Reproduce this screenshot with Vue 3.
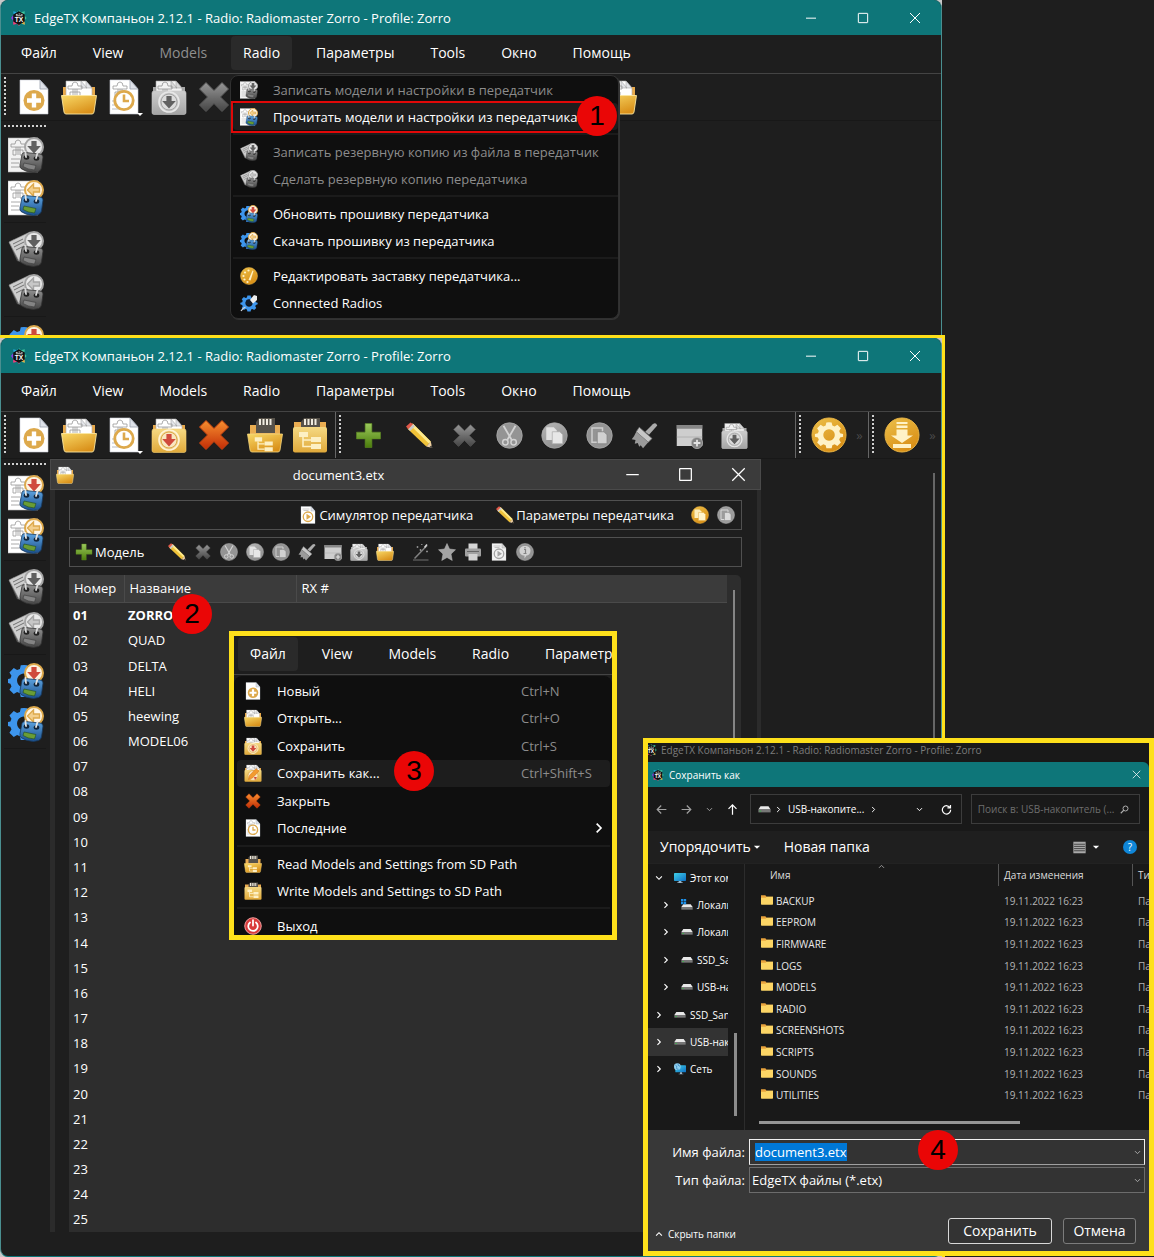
<script setup>
import { h, onMounted, ref } from 'vue'

const Icon = (props) =>
  h('svg', { viewBox: '0 0 36 36', 'aria-hidden': 'true' }, [h('use', { href: '#i-' + props.name })])
Icon.props = ['name']

const appTitle = 'EdgeTX Компаньон 2.12.1 - Radio: Radiomaster Zorro - Profile: Zorro'
const menus = ['Файл', 'View', 'Models', 'Radio', 'Параметры', 'Tools', 'Окно', 'Помощь']

const fileTools = [
  { icon: 'new', label: 'Новый' },
  { icon: 'open', label: 'Открыть' },
  { icon: 'recent', label: 'Последние', drop: true },
  { icon: 'save', label: 'Сохранить' },
  { icon: 'close', label: 'Закрыть' },
]
const sdTools = [
  { icon: 'sdread', label: 'Read from SD Path' },
  { icon: 'sdwrite', label: 'Write to SD Path' },
]
const editTools = [
  { icon: 'pencil', label: 'Редактировать' },
  { icon: 'close', label: 'Удалить', off: true },
  { icon: 'cut', label: 'Вырезать', off: true },
  { icon: 'copy', label: 'Копировать', off: true },
  { icon: 'paste', label: 'Вставить', off: true },
  { icon: 'brush', label: 'Мастер', off: true },
  { icon: 'window', label: 'Добавить', off: true },
  { icon: 'save', label: 'Сохранить модель', off: true },
]
const childTools = [
  { icon: 'wand', label: 'Wizard' },
  { icon: 'star', label: 'По умолчанию' },
  { icon: 'printer', label: 'Печать' },
  { icon: 'play', label: 'Симулятор модели' },
  { icon: 'info', label: 'Информация' },
]
const sideTools = [
  [
    { icon: 'write', label: 'Записать модели', needsDoc: true },
    { icon: 'read', label: 'Прочитать модели' },
  ],
  [
    { icon: 'backupwrite', label: 'Записать резервную копию', off: true },
    { icon: 'backupread', label: 'Сделать резервную копию', off: true },
  ],
  [
    { icon: 'fwwrite', label: 'Обновить прошивку' },
    { icon: 'fwread', label: 'Скачать прошивку' },
  ],
]

const radioMenu = [
  [
    { icon: 'write', text: 'Записать модели и настройки в передатчик', off: true },
    { icon: 'read', text: 'Прочитать модели и настройки из передатчика', active: true },
  ],
  [
    { icon: 'backupwrite', text: 'Записать резервную копию из файла в передатчик', off: true },
    { icon: 'backupread', text: 'Сделать резервную копию передатчика', off: true },
  ],
  [
    { icon: 'fwwrite', text: 'Обновить прошивку передатчика' },
    { icon: 'fwread', text: 'Скачать прошивку из передатчика' },
  ],
  [
    { icon: 'palette', text: 'Редактировать заставку передатчика...' },
    { icon: 'connected', text: 'Connected Radios' },
  ],
]
const fileMenu = [
  [
    { icon: 'new', text: 'Новый', key: 'Ctrl+N' },
    { icon: 'open', text: 'Открыть...', key: 'Ctrl+O' },
    { icon: 'save', text: 'Сохранить', key: 'Ctrl+S' },
    { icon: 'saveas', text: 'Сохранить как...', key: 'Ctrl+Shift+S', active: true },
    { icon: 'close', text: 'Закрыть' },
    { icon: 'recent', text: 'Последние', sub: true },
  ],
  [
    { icon: 'sdread', text: 'Read Models and Settings from SD Path' },
    { icon: 'sdwrite', text: 'Write Models and Settings to SD Path' },
  ],
  [{ icon: 'power', text: 'Выход' }],
]

const names = ['ZORRO', 'QUAD', 'DELTA', 'HELI', 'heewing', 'MODEL06']
const models = Array.from({ length: 25 }, (_, i) => ({
  id: String(i + 1).padStart(2, '0'),
  name: names[i] || '',
}))

const tree = [
  { icon: 'monitor', text: 'Этот компьютер', open: true },
  { icon: 'sysdrive', text: 'Локальный диск', child: true },
  { icon: 'drive', text: 'Локальный диск', child: true },
  { icon: 'drive', text: 'SSD_SanDisk', child: true },
  { icon: 'drive', text: 'USB-накопитель', child: true },
  { icon: 'drive', text: 'SSD_SanDisk' },
  { icon: 'drive', text: 'USB-накопитель', active: true },
  { icon: 'network', text: 'Сеть' },
]
const folders = ['BACKUP', 'EEPROM', 'FIRMWARE', 'LOGS', 'MODELS', 'RADIO', 'SCREENSHOTS', 'SCRIPTS', 'SOUNDS', 'UTILITIES']

const fileName = ref('document3.etx')
const nameInput = ref(null)
onMounted(() => {
  nameInput.value.focus({ preventScroll: true })
  nameInput.value.select()
})
</script>

<template>
  <svg class="sprite" aria-hidden="true">
    <defs>
      <linearGradient id="gold" x1="0" y1="0" x2="0.6" y2="1">
        <stop offset="0" stop-color="#f8d866" /><stop offset="1" stop-color="#d9901a" />
      </linearGradient>
      <linearGradient id="disc" x1="0" y1="0" x2="0.6" y2="1">
        <stop offset="0" stop-color="#ecc04a" /><stop offset="1" stop-color="#d98f16" />
      </linearGradient>
      <linearGradient id="pale" x1="0" y1="0" x2="0" y2="1">
        <stop offset="0" stop-color="#f5d983" /><stop offset="1" stop-color="#e0a93a" />
      </linearGradient>
      <linearGradient id="red" x1="0" y1="0" x2="0" y2="1">
        <stop offset="0" stop-color="#f78f2f" /><stop offset="1" stop-color="#c22c06" />
      </linearGradient>
      <linearGradient id="green" x1="0" y1="0" x2="0" y2="1">
        <stop offset="0" stop-color="#9bc95c" /><stop offset="1" stop-color="#4b7d0b" />
      </linearGradient>
      <linearGradient id="blue" x1="0" y1="0" x2="0" y2="1">
        <stop offset="0" stop-color="#5da3df" /><stop offset="1" stop-color="#1b4f8c" />
      </linearGradient>
      <linearGradient id="sky" x1="0" y1="0" x2="1" y2="1">
        <stop offset="0" stop-color="#3fd0e8" /><stop offset="1" stop-color="#0f6fc4" />
      </linearGradient>

      <g id="p-page">
        <path d="M4 1H24L32 10V35H4Z" fill="#fff" stroke="#c9ced6" stroke-width=".6" />
        <path d="M24 1V10H32Z" fill="#dfe3ea" stroke="#9aa1ad" stroke-width=".8" />
      </g>
      <g id="p-plane" fill="none" stroke="#9a9a9a" stroke-width=".8">
        <path d="M7 10h14v-3h-4q0-4-3-4t-3 4H7zM12 10v3h4v-3M14 10v8M9 13h3v5H9zM16 13h3v5h-3z" />
      </g>
      <g id="p-lines" stroke="#b9bdc4" stroke-width="1.2"><path d="M6 22h9M6 26h8M6 30h9" /></g>
      <g id="p-down"><path d="M-2.6 -6h5.2v5h4.2L0 6.5-6.8 -1h4.2z" /></g>
      <g id="p-badge-down">
        <circle cx="26" cy="10" r="9" fill="#fdf3e2" stroke="#dda94c" stroke-width="2" />
        <use href="#p-down" transform="translate(26 10)" fill="#d04a3c" />
      </g>
      <g id="p-badge-left">
        <circle cx="26" cy="10" r="9" fill="#fff6e6" stroke="#dda94c" stroke-width="2" />
        <path d="M19.500 10l6-6v4h6v4h-6v4z" fill="#f3cf8d" stroke="#dda94c" stroke-width="1.400" />
      </g>
      <g id="p-bot">
        <path d="M14 17.500q.5-2 3-2l15 1.500q3 .5 3 3l-1.500 11q-.5 2.500-3 3.500l-5 1q-8-.5-12.500-4-1.500-1.500-1-4z" fill="url(#blue)" stroke="#173a60" stroke-width=".8" />
        <path d="M16 26l12 2.500-1.500 4.500q-7-.5-11.500-3.500z" fill="#6a9d35" stroke="#1f4a20" stroke-width=".6" />
        <ellipse cx="18.500" cy="20.500" rx="2.800" ry="2.200" fill="#12263c" /><ellipse cx="28.500" cy="21.500" rx="2.800" ry="2.200" fill="#12263c" />
        <path d="M18 20l-.6-5M28 21l1.500-5" stroke="#e4e4e4" stroke-width="1.800" stroke-linecap="round" />
      </g>
      <path id="p-gear" d="M0-14l3 .3.800 3.400 2.600 1.100L9.500-11l4 4-1.900 3 1 2.600 3.400.9v3l-3.400 1-1 2.500 1.900 3.100-4 3.900-3.100-1.800-2.600 1-.8 3.500h-6l-.8-3.500-2.600-1-3.100 1.800-4-3.900 1.900-3.100-1-2.500-3.400-1v-3l3.400-.9 1-2.600-1.900-3 4-4 3.100 1.800 2.600-1.100.8-3.400zM0-6a6.500 6.500 0 1 0 .1 0z" fill-rule="evenodd" />
      <g id="p-cards">
        <path d="M1 12L6 8l9 24-6-2z" fill="#555" />
        <path d="M1 11L22 1l8 19-19 10z" fill="#d9d9d9" stroke="#9c9c9c" stroke-width=".6" />
        <path d="M5 13l10-5M6 16l10-5M8 19l8-4" stroke="#777" stroke-width="1" />
      </g>
      <g id="p-tree" fill="#fdf0c4"><path d="M7 15h9v5H7zM19 20h10v5H19zM19 27h10v5H19z" /><path d="M11 20v9.500h8M11 23h8" fill="none" stroke="#fdf0c4" stroke-width="1.600" /></g>
      <g id="p-sd"><path d="M12 1h16v15H9V5z" fill="#57524a" /><path d="M13 2v6M16.500 2v6M20 2v6M23.500 2v6" stroke="#f1ece0" stroke-width="2" /></g>
      <g id="p-papers">
        <path d="M2 8h6v12H2zM28 8h6v12H28z" fill="#e8a94a" />
        <path d="M5 2H25L31 9V22H5Z" fill="#fff" stroke="#a9a9a9" stroke-width=".6" /><path d="M25 2v7h6zM20 2v7h6z" fill="#e2e4e8" stroke="#999" stroke-width=".5" />
        <use href="#p-plane" />
      </g>
    </defs>

    <symbol id="i-logo" viewBox="0 0 36 36">
      <path d="M18 0l4 5 9-2-1 9 5 6-5 6 1 9-9-2-4 5z" fill="#3fc7a0" /><path d="M18 0l-4 5-9-2 1 9z" fill="#23a7d8" /><path d="M6 10l-6 8 5 7 1 8z" fill="#8a3fe0" /><path d="M5 24l0 9 9-2 4 5 3-7z" fill="#ef3f7b" /><path d="M24 30l7 3-1-9z" fill="#f2a93b" />
      <path d="M18 3l13 7v16l-13 8-13-8V10z" fill="#111" />
      <path d="M11 10h4M17 9h4M23 10h3M11 13h15" stroke="#ddd" stroke-width="2" />
      <text x="18" y="28" text-anchor="middle" font-family="Liberation Sans, sans-serif" font-size="15" font-weight="bold" fill="#fff">TX</text>
    </symbol>
    <symbol id="i-new" viewBox="0 0 36 36"><use href="#p-page" /><circle cx="18" cy="21.500" r="10.500" fill="#dda94c" /><path d="M18 14.500v14M11 21.500h14" stroke="#fff" stroke-width="4.400" /></symbol>
    <symbol id="i-open" viewBox="0 0 36 36"><use href="#p-papers" /><path d="M.5 16.500H35.500L33 33q-.4 2-2 2H5q-1.600 0-2-2z" fill="url(#gold)" stroke="#fbe7a2" stroke-width=".9" /></symbol>
    <symbol id="i-recent" viewBox="0 0 36 36"><use href="#p-page" /><use href="#p-plane" /><use href="#p-lines" /><circle cx="18" cy="21.500" r="9.200" fill="#fff" stroke="#dda94c" stroke-width="2.800" /><path d="M18 15.500v6.500h5" fill="none" stroke="#dda94c" stroke-width="2.600" /></symbol>
    <symbol id="i-save" viewBox="0 0 36 36"><use href="#p-papers" /><rect x="1" y="12" width="34" height="23.500" rx="2" fill="url(#pale)" stroke="#f3cf70" stroke-width=".6" /><circle cx="18" cy="23" r="10" fill="#efd08a" stroke="#fff3d6" stroke-width="1.600" /><circle cx="18" cy="23" r="8" fill="#f9e6c0" stroke="#dda94c" stroke-width="1" /><use href="#p-down" transform="translate(18 23)" fill="#d04a3c" /></symbol>
    <symbol id="i-saveas" viewBox="0 0 36 36"><use href="#p-papers" /><rect x="1" y="12" width="34" height="23.500" rx="2" fill="url(#pale)" /><circle cx="18" cy="23" r="10" fill="#f9e6c0" stroke="#dda94c" stroke-width="1.600" /><path d="M9 31l2-8L24 9l6 5-13 14z" fill="#f29a2e" stroke="#d4711a" stroke-width="1" /><path d="M20 26h6l-4 6z" fill="#d04a3c" /></symbol>
    <symbol id="i-close" viewBox="0 0 36 36"><path d="M10 3.500l8 8 8-8 6.500 6.500-8 8 8 8-6.500 6.500-8-8-8 8L3.500 26l8-8-8-8z" fill="url(#red)" stroke="#c8430f" stroke-width="1" stroke-linejoin="round" /></symbol>
    <symbol id="i-sdread" viewBox="0 0 36 36"><path d="M3 8h30v12H3z" fill="#eaad52" /><use href="#p-sd" /><path d="M.5 17H35.500L33 33q-.4 2-2 2H5q-1.600 0-2-2z" fill="url(#gold)" stroke="#f4d780" stroke-width=".8" /><use href="#p-tree" transform="translate(2 8) scale(.82)" /></symbol>
    <symbol id="i-sdwrite" viewBox="0 0 36 36"><path d="M2 5h32v12H2z" fill="#eaad52" /><use href="#p-sd" /><rect x="1" y="10" width="34" height="25.500" rx="2" fill="url(#pale)" /><use href="#p-tree" /></symbol>
    <symbol id="i-plus" viewBox="0 0 36 36"><path d="M13.500 2h9v11.500H34v9H22.500V34h-9V22.500H2v-9h11.500z" fill="url(#green)" stroke="#5c8a22" stroke-width=".8" /></symbol>
    <symbol id="i-pencil" viewBox="0 0 36 36"><path d="M9 2l24 24-6 6.500L2 9z" fill="#f0c238" /><path d="M9 2l24 24-2.500 2.500L6.500 5z" fill="#fdeb8e" /><path d="M33 26l2 8.500-8-2z" fill="#f0d0a0" /><path d="M34 31l1 3.500-3.800-1z" fill="#333" /><path d="M0 6L6 .500 9.500 3 3 9.500z" fill="#e0584a" /><path d="M3 9.500L9.500 3l2.500 2.500L5.500 12z" fill="#c9c9c9" /></symbol>
    <symbol id="i-cut" viewBox="0 0 36 36"><circle cx="18" cy="18" r="17" fill="#9c9c9c" stroke="#b6b6b6" /><path d="M10 5l11 19M26 5L15 24" stroke="#dedede" stroke-width="2.400" /><circle cx="12.500" cy="27" r="3.600" fill="none" stroke="#dedede" stroke-width="2" /><circle cx="23.500" cy="27" r="3.600" fill="none" stroke="#dedede" stroke-width="2" /></symbol>
    <symbol id="i-copy" viewBox="0 0 36 36"><circle cx="18" cy="18" r="17" fill="url(#disc)" stroke="#e5ab3c" /><path d="M7 7h10l4 4v13H7z" fill="#fdeebc" /><path d="M15 13h10l4 4v12H15z" fill="#fff4cc" stroke="#e2b050" stroke-width="1" /></symbol>
    <symbol id="i-paste" viewBox="0 0 36 36"><circle cx="18" cy="18" r="17" fill="#9c9c9c" stroke="#b6b6b6" /><path d="M8 8h14v19H8z" fill="none" stroke="#d8d8d8" stroke-width="2" /><path d="M15 13h9l4 4v12H15z" fill="#dcdcdc" stroke="#888" stroke-width="1" /></symbol>
    <symbol id="i-brush" viewBox="0 0 36 36"><path d="M19 13L29 3q4-3 6 1.500L24 17z" fill="#b4b4b4" /><path d="M11 7l17 15-5 5L7 13z" fill="#d0d0d0" stroke="#777" /><path d="M7 13l16 14-7 8-3-4-2 2-2-5-4 1 1-5-5-1 3-4z" fill="#a2a2a2" /></symbol>
    <symbol id="i-window" viewBox="0 0 36 36"><path d="M1 4h34v28H1z" fill="#d9d9d9" /><path d="M1 4h34v5H1z" fill="#8d8d8d" /><path d="M1 20h34" stroke="#b0b0b0" /><circle cx="28" cy="28" r="7.500" fill="#8a8a8a" stroke="#bbb" /><path d="M28 23.500v9M23.500 28h9" stroke="#eee" stroke-width="2.400" /></symbol>
    <symbol id="i-wand" viewBox="0 0 36 36"><path d="M5 31L30 5" stroke="#888" stroke-width="3" /><path d="M25 9l5-6" stroke="#ddd" stroke-width="3" /><path d="M2 34h31" stroke="#777" stroke-width="2" /><path d="M9 8h4M11 6v4M18 3h3M15 14h4M17 12v4M28 17h4M30 15v4" stroke="#999" stroke-width="1.800" /></symbol>
    <symbol id="i-star" viewBox="0 0 36 36"><path d="M18 1l5 11 12 1.500-9 8.500 2.500 13L18 29 7.500 35 10 22 1 13.500 13 12z" fill="#adadad" stroke="#c4c4c4" /></symbol>
    <symbol id="i-printer" viewBox="0 0 36 36"><path d="M9 1h18v12H9z" fill="#e0e0e0" /><rect x="2" y="11" width="32" height="16" rx="2" fill="#a9a9a9" /><path d="M6 17h24" stroke="#6c6c6c" stroke-width="2" /><path d="M9 22h18v13H9z" fill="#ddd" /></symbol>
    <symbol id="i-play" viewBox="0 0 36 36"><use href="#p-page" /><path d="M7 6h14M9 9h10" stroke="#999" /><circle cx="18" cy="21.500" r="9.500" fill="#fff" stroke="#dda94c" stroke-width="2.600" /><path d="M15 15.500l9 6-9 6z" fill="#dda94c" /></symbol>
    <symbol id="i-info" viewBox="0 0 36 36"><circle cx="18" cy="18" r="17" fill="#9c9c9c" stroke="#b6b6b6" /><path d="M18 6c7 0 11 4 11 9.500S25 25 21 25l-4 6v-6C11 25 7 21 7 15.500S11 6 18 6z" fill="#dcdcdc" /><path d="M18 8v3M16 13h3v8M15 21h6" stroke="#8a8a8a" stroke-width="2.400" fill="none" /></symbol>
    <symbol id="i-gear" viewBox="0 0 36 36"><circle cx="18" cy="18" r="17" fill="url(#disc)" stroke="#e8b445" /><use href="#p-gear" transform="translate(18 17.500) scale(.88)" fill="#fff2c6" /></symbol>
    <symbol id="i-download" viewBox="0 0 36 36"><circle cx="18" cy="18" r="17" fill="url(#disc)" stroke="#e8b445" /><path d="M12.500 5h11v2h-11zM12.500 8.500h11v2.500h-11zM12.500 12.500h11v6h5.500L18 26 7 18.500h5.500zM9 27h18v4H9z" fill="#fff2c6" /></symbol>
    <symbol id="i-write" viewBox="0 0 36 36"><path d="M0 1h30v34H0z" fill="#fff" stroke="#bbb" stroke-width=".6" /><use href="#p-plane" transform="translate(-4 0)" /><path d="M3 22h9M3 26h8M3 30h9" stroke="#aaa" /><use href="#p-badge-down" /><use href="#p-bot" /></symbol>
    <symbol id="i-read" viewBox="0 0 36 36"><path d="M0 1h30v34H0z" fill="#fff" stroke="#bbb" stroke-width=".6" /><use href="#p-plane" transform="translate(-4 0)" /><path d="M3 22h9M3 26h8M3 30h9" stroke="#aaa" /><use href="#p-badge-left" /><use href="#p-bot" /></symbol>
    <symbol id="i-backupwrite" viewBox="0 0 36 36"><use href="#p-cards" /><use href="#p-badge-down" /><use href="#p-bot" /></symbol>
    <symbol id="i-backupread" viewBox="0 0 36 36"><use href="#p-cards" /><use href="#p-badge-left" /><use href="#p-bot" /></symbol>
    <symbol id="i-fwwrite" viewBox="0 0 36 36"><use href="#p-gear" transform="translate(16 17) scale(1.080)" fill="#3d95ec" /><use href="#p-badge-down" /><use href="#p-bot" /></symbol>
    <symbol id="i-fwread" viewBox="0 0 36 36"><use href="#p-gear" transform="translate(16 17) scale(1.080)" fill="#3d95ec" /><use href="#p-badge-left" /><use href="#p-bot" /></symbol>
    <symbol id="i-palette" viewBox="0 0 36 36"><circle cx="18" cy="18" r="17" fill="url(#disc)" stroke="#e8b445" /><path d="M17 26L25 7l2 1-6 19z" fill="#fff2c6" /><g fill="#fff2c6"><circle cx="17" cy="7" r="2.200" /><circle cx="10" cy="11" r="2.200" /><circle cx="7" cy="18" r="2.200" /><circle cx="9" cy="25" r="2.200" /><circle cx="15" cy="30" r="2.200" /></g></symbol>
    <symbol id="i-connected" viewBox="0 0 36 36"><use href="#p-gear" transform="translate(18 18) scale(1.080)" fill="#3d95ec" /><circle cx="18" cy="17" r="6.500" fill="#111c2c" /><path d="M2 34q4-6 9-8" fill="none" stroke="#cfd6de" stroke-width="2.500" /><path d="M20 12l8-10 6 2v8l-8 7z" fill="#ececec" /></symbol>
    <symbol id="i-power" viewBox="0 0 36 36"><circle cx="18" cy="18" r="16.500" fill="#d93a3a" stroke="#f0a0a0" stroke-width="2" /><path d="M12 11a9.500 9.500 0 1 0 12 0" fill="none" stroke="#fff" stroke-width="3.500" stroke-linecap="round" /><path d="M18 6v11" stroke="#fff" stroke-width="3.500" stroke-linecap="round" /></symbol>
    <symbol id="i-folder" viewBox="0 0 36 36"><path d="M0 4h13l4 4h19v8H0z" fill="#e8a33d" /><path d="M0 11h14l3-3h19v22q0 2-2 2H2q-2 0-2-2z" fill="#fcd565" /></symbol>
    <symbol id="i-drive" viewBox="0 0 36 36"><path d="M7 9h22l6 9H1z" fill="#e8e8e8" /><path d="M1 18h34v8H1z" fill="#777" /><path d="M4 21h5v3H4z" fill="#3fae4d" /></symbol>
    <symbol id="i-sysdrive" viewBox="0 0 36 36"><path d="M7 16h22l6 8H1z" fill="#e8e8e8" /><path d="M1 24h34v8H1z" fill="#777" /><path d="M0 0h7v7H0zM8.500 0h7v7h-7zM0 8.500h7v7H0zM8.500 8.500h7v7h-7z" fill="#1e90e8" /></symbol>
    <symbol id="i-monitor" viewBox="0 0 36 36"><rect x="0" y="3" width="36" height="24" rx="2" fill="url(#sky)" /><path d="M14 27h8v4h4v2H10v-2h4z" fill="#9bb8cc" /></symbol>
    <symbol id="i-network" viewBox="0 0 36 36"><rect x="4" y="7" width="32" height="21" rx="2" fill="url(#sky)" /><path d="M18 28h6v4h4v2H14v-2h4z" fill="#9bb8cc" /><circle cx="10" cy="11" r="10" fill="#8fd0ef" /><path d="M4 6q6 2 4 8t6 5M12 2q-2 6 6 8" stroke="#2a78b8" stroke-width="2" fill="none" /></symbol>
    <symbol id="i-min" viewBox="0 0 36 36"><path d="M3 18.500h30" stroke="#fff" stroke-width="3" /></symbol>
    <symbol id="i-max" viewBox="0 0 36 36"><rect x="4" y="4" width="28" height="28" rx="1" fill="none" stroke="#fff" stroke-width="3" /></symbol>
    <symbol id="i-x" viewBox="0 0 36 36"><path d="M3 3l30 30M33 3L3 33" stroke="#fff" stroke-width="3" /></symbol>
    <symbol id="i-chev-r" viewBox="0 0 36 36"><path d="M11 5l13 13-13 13" fill="none" stroke="currentColor" stroke-width="5" /></symbol>
    <symbol id="i-chev-d" viewBox="0 0 36 36"><path d="M5 11l13 13 13-13" fill="none" stroke="currentColor" stroke-width="5" /></symbol>
    <symbol id="i-chev-u" viewBox="0 0 36 36"><path d="M5 25l13-13 13 13" fill="none" stroke="currentColor" stroke-width="5" /></symbol>
    <symbol id="i-left" viewBox="0 0 36 36"><path d="M34 18H5M17 5L4 18l13 13" fill="none" stroke="currentColor" stroke-width="4" /></symbol>
    <symbol id="i-right" viewBox="0 0 36 36"><path d="M2 18h29M19 5l13 13-13 13" fill="none" stroke="currentColor" stroke-width="4" /></symbol>
    <symbol id="i-up" viewBox="0 0 36 36"><path d="M18 35V4M5 16L18 3l13 13" fill="none" stroke="currentColor" stroke-width="4" /></symbol>
    <symbol id="i-refresh" viewBox="0 0 36 36"><path d="M30 13A13.500 13.500 0 1 0 31.500 19M31 3v10H21" fill="none" stroke="currentColor" stroke-width="4" /></symbol>
    <symbol id="i-search" viewBox="0 0 36 36"><circle cx="22" cy="14" r="10" fill="none" stroke="currentColor" stroke-width="4" /><path d="M15 21L3 33" stroke="currentColor" stroke-width="4.500" /></symbol>
    <symbol id="i-list" viewBox="0 0 36 36"><path d="M1 2h34v32H1z" fill="#a9a9a9" /><path d="M3 9h30M3 15h30M3 21h30M3 27h30" stroke="#222" stroke-width="2" /></symbol>
    <symbol id="i-caret" viewBox="0 0 36 36"><path d="M4 12h28L18 26z" fill="currentColor" /></symbol>
  </svg>

  <main class="stage">
    <section class="shot first">
      <div class="window">
        <header class="titlebar">
          <Icon name="logo" class="logo" />
          <h1>{{ appTitle }}</h1>
          <button class="sys" aria-label="Свернуть"><Icon name="min" /></button>
          <button class="sys" aria-label="Развернуть"><Icon name="max" /></button>
          <button class="sys" aria-label="Закрыть окно"><Icon name="x" /></button>
        </header>
        <nav class="menubar">
          <button v-for="m in menus" :key="m" :class="{ off: m === 'Models', active: m === 'Radio' }">{{ m }}</button>
        </nav>
        <div class="toolbars">
          <div class="toolbar">
            <span class="grip"></span>
            <button v-for="t in fileTools" :key="t.label" class="tool" :aria-label="t.label">
              <Icon :name="t.icon" :class="{ gray: t.icon === 'save' || t.icon === 'close' }" />
              <i v-if="t.drop" class="drop"></i>
            </button>
            <span class="sep"></span>
            <button v-for="t in sdTools" :key="t.label" class="tool" :aria-label="t.label"><Icon :name="t.icon" /></button>
          </div>
          <div class="toolbar last">
            <span class="grip"></span>
            <button v-for="t in editTools.slice(0, 5)" :key="t.label" class="tool" :aria-label="t.label"><Icon :name="t.icon" /></button>
            <span class="grip"></span>
            <span class="sep"></span>
            <span class="grip"></span>
            <button class="tool" aria-label="Открыть папку"><Icon name="open" /></button>
          </div>
        </div>
        <div class="workspace">
          <aside class="sidebar">
            <span class="hgrip"></span>
            <div v-for="(g, i) in sideTools" :key="i" class="sidegroup">
              <button v-for="t in g" :key="t.icon" :aria-label="t.label"><Icon :name="t.icon" :class="{ gray: t.off || t.needsDoc }" /></button>
            </div>
          </aside>
        </div>
      </div>

      <div class="popup radio-menu">
        <ul v-for="(g, i) in radioMenu" :key="i">
          <li v-for="e in g" :key="e.text">
            <button class="entry" :class="{ off: e.off, active: e.active }">
              <Icon :name="e.icon" :class="{ gray: e.off }" /><span>{{ e.text }}</span>
            </button>
          </li>
        </ul>
        <div class="highlight"></div>
        <b class="mark one">1</b>
      </div>
    </section>

    <section class="shot second">
      <div class="window">
        <header class="titlebar">
          <Icon name="logo" class="logo" />
          <h1>{{ appTitle }}</h1>
          <button class="sys" aria-label="Свернуть"><Icon name="min" /></button>
          <button class="sys" aria-label="Развернуть"><Icon name="max" /></button>
          <button class="sys" aria-label="Закрыть окно"><Icon name="x" /></button>
        </header>
        <nav class="menubar">
          <button v-for="m in menus" :key="m">{{ m }}</button>
        </nav>
        <div class="toolbars">
          <div class="toolbar">
            <span class="grip"></span>
            <button v-for="t in fileTools" :key="t.label" class="tool" :aria-label="t.label">
              <Icon :name="t.icon" />
              <i v-if="t.drop" class="drop"></i>
            </button>
            <span class="sep"></span>
            <button v-for="t in sdTools" :key="t.label" class="tool" :aria-label="t.label"><Icon :name="t.icon" /></button>
          </div>
          <div class="toolbar mid">
            <span class="grip"></span>
            <button class="tool small" aria-label="Добавить модель"><Icon name="plus" /></button>
            <span class="sep"></span>
            <button v-for="t in editTools" :key="t.label" class="tool small" :aria-label="t.label">
              <Icon :name="t.icon" :class="{ gray: t.off }" />
            </button>
          </div>
          <div class="toolbar end">
            <span class="grip"></span>
            <button class="tool" aria-label="Настройки"><Icon name="gear" /></button>
            <span class="more">»</span>
          </div>
          <div class="toolbar last">
            <span class="grip"></span>
            <button class="tool" aria-label="Загрузить"><Icon name="download" /></button>
            <span class="more">»</span>
          </div>
        </div>
        <div class="workspace">
          <aside class="sidebar">
            <span class="hgrip"></span>
            <div v-for="(g, i) in sideTools" :key="i" class="sidegroup">
              <button v-for="t in g" :key="t.icon" :aria-label="t.label"><Icon :name="t.icon" :class="{ gray: t.off }" /></button>
            </div>
          </aside>
          <div class="child">
            <header class="childbar">
              <Icon name="open" class="doc" />
              <h2>document3.etx</h2>
              <button aria-label="Свернуть документ"><Icon name="min" /></button>
              <button aria-label="Развернуть документ"><Icon name="max" /></button>
              <button aria-label="Закрыть документ"><Icon name="x" /></button>
            </header>
            <div class="childbody">
              <div class="strip right">
                <button class="wide"><Icon name="play" />Симулятор передатчика</button>
                <button class="wide"><Icon name="pencil" />Параметры передатчика</button>
                <span class="pair">
                  <button class="mini" aria-label="Копировать всё"><Icon name="copy" /></button>
                  <button class="mini" aria-label="Вставить всё"><Icon name="paste" /></button>
                </span>
              </div>
              <div class="strip">
                <button class="wide model"><Icon name="plus" />Модель</button>
                <button v-for="t in editTools" :key="t.label" class="mini" :aria-label="t.label"><Icon :name="t.icon" :class="{ gray: t.off }" /></button>
                <button class="mini" aria-label="Открыть модель"><Icon name="open" /></button>
                <span class="gap"></span>
                <button v-for="t in childTools" :key="t.label" class="mini" :aria-label="t.label"><Icon :name="t.icon" class="gray" /></button>
              </div>
              <div class="grid">
                <table class="models">
                  <thead>
                    <tr><th class="num">Номер</th><th class="name">Название</th><th>RX #</th></tr>
                  </thead>
                  <tbody>
                    <tr v-for="(m, i) in models" :key="m.id" :class="{ current: i === 0 }">
                      <td>{{ m.id }}</td><td>{{ m.name }}</td><td></td>
                    </tr>
                  </tbody>
                </table>
                <span class="vbar"></span>
              </div>
            </div>
          </div>
          <span class="mdibar"></span>
        </div>
        <footer class="status"></footer>
      </div>

      <b class="mark two">2</b>

      <div class="file-shot">
        <nav class="menubar">
          <button v-for="m in menus.slice(0, 5)" :key="m" :class="{ active: m === 'Файл' }">{{ m }}</button>
        </nav>
        <div class="file-menu">
          <ul v-for="(g, i) in fileMenu" :key="i" :class="{ tall: i === 0 }">
            <li v-for="e in g" :key="e.text">
              <button class="entry" :class="{ active: e.active }">
                <Icon :name="e.icon" /><span>{{ e.text }}</span>
                <kbd v-if="e.key">{{ e.key }}</kbd>
                <Icon v-if="e.sub" name="chev-r" class="sub" />
              </button>
            </li>
          </ul>
        </div>
        <b class="mark three">3</b>
      </div>
    </section>

    <section class="dialog">
      <div class="ghost"><Icon name="logo" />{{ appTitle }}</div>
      <header class="dlgbar">
        <Icon name="logo" /><h2>Сохранить как</h2>
        <button aria-label="Закрыть диалог"><Icon name="x" /></button>
      </header>
      <div class="nav">
        <button class="dim" aria-label="Назад"><Icon name="left" /></button>
        <button class="dim" aria-label="Вперёд"><Icon name="right" /></button>
        <button class="dim tiny" aria-label="Журнал"><Icon name="chev-d" /></button>
        <button aria-label="Вверх"><Icon name="up" /></button>
        <div class="address">
          <Icon name="drive" class="drv" /><Icon name="chev-r" class="crumb" />
          <span>USB-накопите...</span><Icon name="chev-r" class="crumb" />
          <button class="tiny end" aria-label="Предыдущие расположения"><Icon name="chev-d" /></button>
          <button class="reload" aria-label="Обновить"><Icon name="refresh" /></button>
        </div>
        <label class="search">
          <input type="text" placeholder="Поиск в: USB-накопитель (..." aria-label="Поиск" /><Icon name="search" />
        </label>
      </div>
      <div class="commands">
        <button>Упорядочить<Icon name="caret" class="caret" /></button>
        <button>Новая папка</button>
        <button class="view" aria-label="Вид"><Icon name="list" /><Icon name="caret" class="caret" /></button>
        <button class="help" aria-label="Справка">?</button>
      </div>
      <div class="browser">
        <ul class="tree">
          <li v-for="(n, i) in tree" :key="i" :class="{ nested: n.child, active: n.active }">
            <Icon :name="n.open ? 'chev-d' : 'chev-r'" class="arrow" /><Icon :name="n.icon" class="node" /><span>{{ n.text }}</span>
          </li>
        </ul>
        <span class="treebar"></span>
        <div class="files">
          <Icon name="chev-u" class="sort" />
          <table>
            <thead>
              <tr><th class="fname">Имя</th><th class="fdate">Дата изменения</th><th>Тип</th></tr>
            </thead>
            <tbody>
              <tr v-for="f in folders" :key="f">
                <td class="fcell"><Icon name="folder" />{{ f }}</td><td>19.11.2022 16:23</td><td>Папка</td>
              </tr>
            </tbody>
          </table>
          <span class="hbar"></span>
        </div>
      </div>
      <form class="dlgfoot" @submit.prevent>
        <label for="fname">Имя файла:</label>
        <div class="field bright">
          <input id="fname" ref="nameInput" v-model="fileName" type="text" /><Icon name="chev-d" />
        </div>
        <label for="ftype">Тип файла:</label>
        <div class="field">
          <select id="ftype"><option>EdgeTX файлы (*.etx)</option></select><Icon name="chev-d" />
        </div>
        <div class="actions">
          <button type="button" class="hide"><Icon name="chev-u" />Скрыть папки</button>
          <button type="submit" class="btn primary">Сохранить</button>
          <button type="button" class="btn">Отмена</button>
        </div>
        <b class="mark four">4</b>
      </form>
    </section>
  </main>
</template>

<style>
body {
  background: #1e1e1e;
}
</style>

<style scoped>
* {
  box-sizing: border-box;
}
.sprite {
  position: absolute;
  width: 0;
  height: 0;
}
.stage {
  position: relative;
  font: 13px/18px "Open Sans", "Noto Sans", sans-serif;
  color: #fff;
}
button,
input,
select {
  margin: 0;
  padding: 0;
  border: 0;
  background: none;
  color: inherit;
  font: inherit;
}
h1,
h2,
ul {
  margin: 0;
  padding: 0;
  font: inherit;
  list-style: none;
}
svg {
  display: block;
  flex: none;
}
.gray {
  filter: grayscale(1) brightness(0.95);
}

/* captured windows */
.shot {
  position: relative;
  background: #c8c8c8;
}
.first {
  width: calc(100% - 212px);
  height: 335px;
  overflow: hidden;
}
.second {
  width: calc(100% - 209px);
  border: solid #fee01b;
  border-width: 3px 3px 0 0;
}
.window {
  border: solid #4a8f90;
  border-width: 0 1px;
  border-radius: 8px 8px 0 0;
  background: #1e1e1e;
  overflow: hidden;
}
.first .window {
  height: 100%;
}
.second .window {
  border-bottom: 1px solid #0e7679;
  border-radius: 8px;
}
.titlebar {
  display: flex;
  align-items: center;
  height: 35px;
  padding-left: 10px;
  background: #0e7679;
}
.logo {
  width: 16px;
  height: 16px;
  margin-right: 7px;
}
.titlebar h1 {
  flex: 1;
  white-space: nowrap;
}
.sys {
  display: flex;
  justify-content: center;
  width: 52px;
}
.sys svg {
  width: 12px;
  height: 12px;
}
.menubar {
  display: flex;
  gap: 12px;
  height: 39px;
  padding: 1px 0 3px 8px;
  border-bottom: 1px solid #444;
  font-size: 14px;
  overflow: hidden;
}
.menubar button {
  flex: none;
  height: 34px;
  padding: 0 12px;
  border-radius: 4px;
}
.menubar .off {
  color: #8f8f8f;
}
.menubar .active {
  background: #2a2a2a;
}
.toolbars {
  display: flex;
  height: 47px;
  border-bottom: 1px solid #181818;
}
.toolbar {
  display: flex;
  align-items: center;
  padding-right: 3px;
}
.second .toolbar {
  border-right: 1px solid #666;
}
.second .toolbar.end {
  padding-right: 0;
}
.second .toolbar.last {
  border-right: 0;
  padding-right: 0;
}
.toolbar.mid {
  flex: 1;
}
.grip {
  width: 10px;
  height: 40px;
  border: solid transparent;
  border-width: 0 5px 0 3px;
  background: repeating-linear-gradient(#d0d0d0 0 2px, transparent 2px 4px) padding-box;
}
.tool {
  position: relative;
  display: flex;
  align-items: center;
  justify-content: center;
  width: 45px;
  height: 45px;
}
.tool svg {
  width: 36px;
  height: 36px;
}
.tool.small svg {
  width: 27px;
  height: 27px;
}
.drop {
  position: absolute;
  right: 3px;
  bottom: 4px;
  border: 3px solid transparent;
  border-top-color: #fff;
  border-bottom: 0;
}
.sep {
  width: 6px;
}
.more {
  width: 17px;
  text-align: center;
  color: #4a4a4a;
}
.workspace {
  display: flex;
}
.sidebar {
  width: 49px;
  padding: 4px 4px 0 3px;
}
.hgrip {
  display: block;
  height: 2px;
  margin-bottom: 6px;
  background: repeating-linear-gradient(90deg, #d0d0d0 0 2px, transparent 2px 4px);
}
.sidegroup {
  padding-bottom: 3px;
  border-bottom: 1px solid #181818;
  margin-bottom: 4px;
}
.sidegroup button {
  display: flex;
  align-items: center;
  justify-content: center;
  width: 44px;
  height: 43px;
}
.sidegroup svg {
  width: 36px;
  height: 36px;
}

/* pop-up menus */
.popup {
  position: absolute;
  border: 1px solid #303030;
  border-radius: 8px;
  background: #0f0f0f;
  box-shadow: 1px 1px 0 #333;
}
.radio-menu {
  left: 230px;
  top: 75px;
  width: 389px;
  padding: 0 0 1px 2px;
}
.radio-menu ul {
  height: 62px;
  border-bottom: 2px solid #1b1b1b;
}
.radio-menu ul:not(:first-child) {
  padding-top: 3px;
}
.radio-menu ul:first-child {
  height: 59px;
}
.radio-menu ul:last-of-type {
  border-bottom: 0;
  height: 58px;
}
.entry {
  display: flex;
  align-items: center;
  width: 100%;
  height: 27px;
  padding: 0 8px 0 7px;
  border-radius: 4px;
  text-align: left;
  white-space: nowrap;
}
.entry svg {
  width: 18px;
  height: 18px;
  margin-right: 15px;
}
.entry span {
  flex: 1;
}
.entry.off {
  color: #8c8c8c;
}
.entry.active {
  background: #1d1d1d;
}
.highlight {
  position: absolute;
  left: 0;
  top: 25px;
  width: 370px;
  height: 32px;
  border: 2px solid #e00808;
}
.mark {
  position: absolute;
  width: 40px;
  height: 40px;
  border-radius: 50%;
  background: #ea0606;
  color: #000;
  font: 28px/40px "Liberation Sans", Arial, sans-serif;
  text-align: center;
}
.one {
  left: 346px;
  top: 20px;
}
.two {
  left: 172px;
  top: 256px;
}
.three {
  left: 160px;
  top: 115px;
}
.four {
  left: 270px;
  top: 0;
}
.file-shot {
  position: absolute;
  left: 229px;
  top: 293px;
  width: 388px;
  height: 309px;
  border: 5px solid #fee01b;
  background: #1e1e1e;
  overflow: hidden;
}
.file-shot .menubar {
  padding-left: 4px;
}
.file-menu {
  margin-top: 1px;
  padding: 1px 2px 0 3px;
  border-radius: 8px 8px 0 0;
  background: #0f0f0f;
}
.file-menu ul {
  display: flex;
  flex-direction: column;
  padding-bottom: 3px;
  margin-bottom: 3px;
  border-bottom: 2px solid #1b1b1b;
}
.file-menu .tall {
  min-height: 170px;
}
.file-menu li {
  flex: 1;
}
kbd {
  width: 81px;
  font: inherit;
  color: #8c8c8c;
}
.entry .sub {
  width: 12px;
  height: 12px;
  margin-right: -3px;
}

/* document window */
.child {
  width: calc(100% - 229px);
  border: solid #2b2b2b;
  border-width: 0 4px 0 5px;
  background: #1e1e1e;
}
.childbar {
  display: flex;
  align-items: center;
  gap: 10px;
  height: 31px;
  margin: 0 -4px 0 -5px;
  padding-left: 5px;
  border: 1px solid #4a4a4a;
  background: #3b3b3b;
}
.childbar h2 {
  flex: 1;
  padding-right: 8px;
  text-align: center;
}
.childbar .doc {
  width: 18px;
  height: 18px;
}
.childbar button {
  display: flex;
  justify-content: center;
  width: 43px;
}
.childbar button svg {
  width: 15px;
  height: 15px;
}
.childbody {
  padding: 10px 15px 0 14px;
}
.strip {
  display: flex;
  align-items: center;
  height: 30px;
  margin-bottom: 7px;
  padding: 0 2px 0 5px;
  border: 1px solid #505050;
}
.right {
  justify-content: flex-end;
  gap: 23px;
}
.wide {
  display: flex;
  align-items: center;
  gap: 2px;
  white-space: nowrap;
}
.strip svg {
  width: 18px;
  height: 18px;
}
.model {
  margin-right: 20px;
}
.pair {
  display: flex;
  margin-left: -10px;
}
.mini {
  display: flex;
  justify-content: center;
  width: 26px;
}
.gap {
  width: 10px;
}
.grid {
  display: flex;
  margin: 8px 1px 0 0;
  border-radius: 0 5px 0 0;
  background: #2d2d2d;
}
.models {
  flex: 1;
  height: 657px;
  border-collapse: collapse;
}
.models th {
  height: 27px;
  padding: 0 5px;
  border-right: 1px solid #4a4a4a;
  border-bottom: 1px solid #4a4a4a;
  background: #3b3b3b;
  font-weight: 400;
  text-align: left;
}
.models th:last-child {
  border-right: 0;
}
.models .num {
  width: 55px;
}
.models .name {
  width: 172px;
}
.models td {
  padding: 0 4px;
}
.current {
  font-weight: 700;
}
.vbar {
  width: 2px;
  margin: 15px 6px 0;
  background: #858585;
}
.mdibar {
  width: 2px;
  margin: 14px 6px 0 auto;
  background: #666;
}
.status {
  height: 24px;
}

/* save dialog */
.dialog {
  position: absolute;
  right: 0;
  bottom: 1px;
  width: 511px;
  border: 5px solid #fee01b;
  background: #191919;
  font-size: 10px;
  line-height: 14px;
  overflow: hidden;
}
.ghost {
  display: flex;
  align-items: center;
  gap: 4px;
  height: 19px;
  margin-left: -3px;
  padding-bottom: 5px;
  color: #7c7c7c;
  white-space: nowrap;
}
.ghost svg,
.dlgbar > svg {
  width: 12px;
  height: 12px;
}
.dlgbar {
  display: flex;
  align-items: center;
  gap: 5px;
  height: 25px;
  padding: 0 8px 0 4px;
  border-radius: 0 6px 0 0;
  background: #0e7679;
}
.dlgbar h2 {
  flex: 1;
}
.dlgbar button svg {
  width: 9px;
  height: 9px;
}
.nav {
  display: flex;
  align-items: center;
  gap: 14px;
  height: 44px;
  padding: 0 9px 0 8px;
}
.nav svg {
  width: 11px;
  height: 11px;
}
.nav .dim {
  color: #a0a0a0;
}
.nav .tiny svg {
  width: 7px;
  height: 7px;
}
.address,
.search {
  display: flex;
  align-items: center;
  height: 30px;
  border: 1px solid #3c3c3c;
}
.address {
  flex: 214;
  margin-left: -2px;
  padding: 0 9px 0 7px;
  white-space: nowrap;
}
.address span {
  margin: 0 6px;
}
.address .drv {
  width: 13px;
  height: 13px;
  margin-right: 4px;
}
.address .crumb {
  width: 7px;
  height: 7px;
}
.address .end {
  margin-left: auto;
}
.reload {
  margin-left: 18px;
}
.search {
  flex: 167;
  min-width: 0;
  margin-left: -5px;
  padding: 0 10px 0 6px;
  color: #b0b0b0;
}
.search input {
  flex: 1;
  min-width: 0;
}
.search input::placeholder {
  color: #6e6e6e;
  opacity: 1;
}
.search svg {
  width: 9px;
  height: 9px;
}
.commands {
  display: flex;
  align-items: center;
  height: 32px;
  padding: 0 12px;
  background: #1f1f1f;
  font-size: 14px;
}
.commands button {
  display: flex;
  align-items: center;
  gap: 2px;
  margin-right: 23px;
}
.caret {
  width: 8px;
  height: 8px;
}
.commands .view {
  gap: 6px;
  margin: 0 23px 0 auto;
}
.view svg:first-child {
  width: 13px;
  height: 13px;
}
.commands .help {
  justify-content: center;
  width: 14px;
  height: 14px;
  margin: 0;
  border-radius: 50%;
  background: #0f86d8;
  font-size: 10px;
}
.browser {
  display: flex;
  height: 267px;
  border-top: 1px solid #222;
}
.tree {
  display: flex;
  flex-direction: column;
  flex: none;
  width: 80px;
  height: 219px;
}
.tree li {
  display: flex;
  flex: 1;
  align-items: center;
  padding-left: 7px;
  white-space: nowrap;
  overflow: hidden;
}
.tree .nested {
  padding-left: 14px;
}
.tree .active {
  background: #333;
}
.tree .arrow {
  width: 8px;
  height: 8px;
  margin-right: 11px;
}
.tree .node {
  width: 12px;
  height: 12px;
  margin-right: 4px;
}
.treebar {
  width: 3px;
  height: 83px;
  margin: 169px 7px 0 6px;
  background: #8c8c8c;
}
.files {
  position: relative;
  flex: 1;
  min-width: 0;
  border-left: 1px solid #2c2c2c;
  overflow: hidden;
}
.sort {
  position: absolute;
  left: 133px;
  top: -1px;
  width: 7px;
  height: 7px;
  color: #999;
}
.files table {
  width: 100%;
  height: 242px;
  table-layout: fixed;
  border-collapse: collapse;
  color: #dcdcdc;
}
.files th {
  height: 26px;
  padding: 0 0 4px 5px;
  font-weight: 400;
  text-align: left;
  background: linear-gradient(#555, #555) no-repeat right top / 1px 22px;
}
.files th:last-child {
  background: none;
}
.files .fname {
  width: 254px;
  padding-left: 25px;
}
.files .fdate {
  width: 134px;
}
.files td {
  padding: 0 0 0 5px;
  white-space: nowrap;
  color: #b4b4b4;
}
.files .fcell {
  padding-left: 16px;
  color: #e8e8e8;
}
.fcell svg {
  display: inline-block;
  width: 12px;
  height: 12px;
  margin-right: 3px;
  vertical-align: -1px;
}
.hbar {
  display: block;
  width: 261px;
  height: 3px;
  margin: 15px 0 0 14px;
  background: #959595;
}
.dlgfoot {
  position: relative;
  display: grid;
  grid-template-columns: 97px 1fr;
  grid-template-rows: 26px 26px 58px;
  column-gap: 4px;
  row-gap: 2px;
  height: 121px;
  padding: 9px 4px 0 0;
  background: #383838;
  font-size: 13px;
}
.dlgfoot label {
  align-self: center;
  text-align: right;
}
.field {
  display: flex;
  align-items: center;
  padding: 0 3px 0 2px;
  border: 1px solid #6c6c6c;
  background: #333;
}
.bright {
  padding-left: 5px;
  border-color: #f0f0f0 #f0f0f0 #a0a0a0;
}
.field input,
.field select {
  flex: 1;
  min-width: 0;
  height: 22px;
  line-height: 20px;
  appearance: none;
  outline: 0;
}
.field input::selection {
  background: #0078d7;
  color: #fff;
}
.field svg {
  width: 7px;
  height: 7px;
  color: #aaa;
}
.actions {
  grid-column: 1 / 3;
  display: flex;
  align-items: flex-start;
  gap: 11px;
  padding: 23px 9px 0 7px;
}
.hide {
  display: flex;
  align-items: center;
  gap: 5px;
  height: 32px;
  margin-right: auto;
  font-size: 10px;
}
.hide svg {
  width: 8px;
  height: 8px;
}
.btn {
  width: 73px;
  height: 26px;
  border: 1px solid #7c7c7c;
  border-radius: 3px;
  background: #333;
  font-size: 14px;
}
.primary {
  width: 104px;
  border-color: #d8d8d8;
}
</style>
